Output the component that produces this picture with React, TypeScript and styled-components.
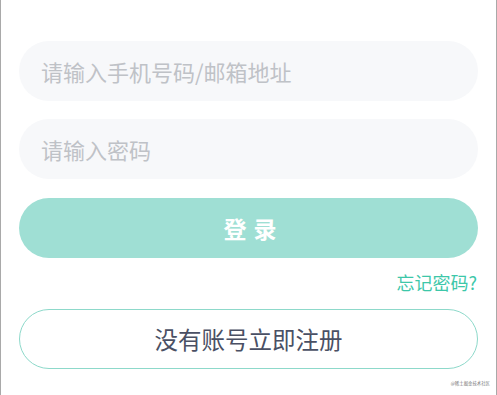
import React from "react";
import styled, { createGlobalStyle } from "styled-components";

const GlobalStyle = createGlobalStyle`
  html, body {
    margin: 0;
    padding: 0;
    background: #ffffff;
  }
  * {
    box-sizing: border-box;
  }
`;

const Page = styled.div`
  position: relative;
  width: 497px;
  height: 395px;
  border-left: 1px solid #a9a9a9;
  border-right: 1px solid #a9a9a9;
  padding: 41px 18px 0 18px;
  display: flex;
  flex-direction: column;
  font-family: "Noto Sans CJK SC", "Noto Sans", sans-serif;
  background: #ffffff;
`;

const Field = styled.input<{ $gap?: number }>`
  height: 60px;
  width: 100%;
  border: none;
  outline: none;
  border-radius: 30px;
  background: #f7f8fa;
  padding: 0 22px;
  font-family: inherit;
  font-size: 22px;
  color: #333;
  margin-bottom: ${(p) => p.$gap ?? 18}px;

  &::placeholder {
    color: #bfc2c7;
  }
`;

const LoginButton = styled.button`
  height: 60px;
  width: 100%;
  border: none;
  border-radius: 30px;
  background: #9fdfd4;
  color: #ffffff;
  font-family: inherit;
  font-size: 23px;
  font-weight: 700;
  letter-spacing: 7px;
  padding: 0 0 0 10px;
  cursor: pointer;
`;

const ForgotRow = styled.div`
  display: flex;
  justify-content: flex-end;
  margin-top: 11px;
  height: 26px;
  line-height: 26px;
  padding-right: 1px;
`;

const ForgotLink = styled.a`
  color: #3dc7a9;
  font-size: 18px;
  text-decoration: none;
`;

const RegisterButton = styled.button`
  margin-top: 14px;
  height: 60px;
  width: 100%;
  border: 1px solid #8dd9ca;
  border-radius: 30px;
  background: #ffffff;
  color: #4a5064;
  font-family: inherit;
  font-size: 23.5px;
  cursor: pointer;
`;

const Watermark = styled.span`
  position: absolute;
  right: 6px;
  bottom: 9px;
  font-size: 4.4px;
  line-height: 5px;
  color: #777;
`;

export default function App() {
  return (
    <>
      <GlobalStyle />
      <Page>
        <Field placeholder="请输入手机号码/邮箱地址" />
        <Field type="password" placeholder="请输入密码" $gap={19} />
        <LoginButton>登录</LoginButton>
        <ForgotRow>
          <ForgotLink href="#">忘记密码?</ForgotLink>
        </ForgotRow>
        <RegisterButton>没有账号立即注册</RegisterButton>
        <Watermark>@稀土掘金技术社区</Watermark>
      </Page>
    </>
  );
}
